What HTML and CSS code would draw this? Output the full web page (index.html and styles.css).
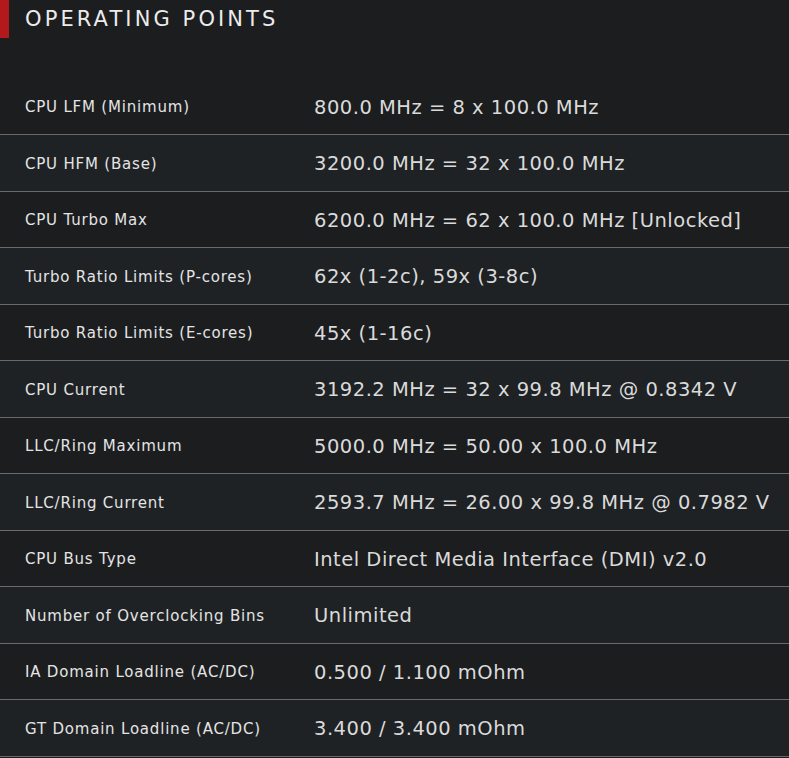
FILE: index.html
```html
<!DOCTYPE html>
<html>
<head>
<meta charset="utf-8">
<link rel="stylesheet" href="styles.css">
</head>
<body>
<div class="panel">
  <div class="header">
    <div class="accent"></div>
    <h1 class="title">OPERATING POINTS</h1>
  </div>
  <div class="rows">
    <div class="row"><div class="label">CPU LFM (Minimum)</div><div class="value">800.0 MHz = 8 x 100.0 MHz</div></div>
    <div class="row alt"><div class="label">CPU HFM (Base)</div><div class="value">3200.0 MHz = 32 x 100.0 MHz</div></div>
    <div class="row"><div class="label">CPU Turbo Max</div><div class="value">6200.0 MHz = 62 x 100.0 MHz [Unlocked]</div></div>
    <div class="row alt"><div class="label">Turbo Ratio Limits (P-cores)</div><div class="value">62x (1-2c), 59x (3-8c)</div></div>
    <div class="row"><div class="label">Turbo Ratio Limits (E-cores)</div><div class="value">45x (1-16c)</div></div>
    <div class="row alt"><div class="label">CPU Current</div><div class="value">3192.2 MHz = 32 x 99.8 MHz @ 0.8342 V</div></div>
    <div class="row"><div class="label">LLC/Ring Maximum</div><div class="value">5000.0 MHz = 50.00 x 100.0 MHz</div></div>
    <div class="row alt"><div class="label">LLC/Ring Current</div><div class="value">2593.7 MHz = 26.00 x 99.8 MHz @ 0.7982 V</div></div>
    <div class="row"><div class="label">CPU Bus Type</div><div class="value">Intel Direct Media Interface (DMI) v2.0</div></div>
    <div class="row alt"><div class="label">Number of Overclocking Bins</div><div class="value">Unlimited</div></div>
    <div class="row"><div class="label">IA Domain Loadline (AC/DC)</div><div class="value">0.500 / 1.100 mOhm</div></div>
    <div class="row alt"><div class="label">GT Domain Loadline (AC/DC)</div><div class="value">3.400 / 3.400 mOhm</div></div>
  </div>
</div>
</body>
</html>
```
FILE: styles.css
```css
html, body {
  margin: 0;
  padding: 0;
  background: #1c1d1f;
}
body {
  font-family: "DejaVu Sans", sans-serif;
  color: #e2e2e2;
  width: 789px;
  height: 758px;
  overflow: hidden;
}
.panel {
  display: flex;
  flex-direction: column;
}
.header {
  height: 78.5px;
  display: flex;
  align-items: flex-start;
}
.accent {
  width: 9px;
  height: 38px;
  background: #b3191c;
  flex: none;
}
.title {
  margin: 0;
  padding: 6px 0 0 16px;
  font-size: 21px;
  font-weight: normal;
  letter-spacing: 3.1px;
  line-height: 26px;
  color: #ececec;
}
.rows {
  display: flex;
  flex-direction: column;
}
.row {
  height: 56.5px;
  box-sizing: border-box;
  border-bottom: 1px solid #6a6a6a;
  display: flex;
  align-items: center;
  padding-top: 2px;
  background: #1c1d1f;
}
.row.alt {
  background: #1f2224;
}
.label {
  width: 289px;
  padding-left: 25px;
  font-size: 15px;
  letter-spacing: 0.8px;
  color: #e4e4e4;
  flex: none;
}
.value {
  font-size: 19.5px;
  letter-spacing: 0.5px;
  color: #dadada;
}
```
